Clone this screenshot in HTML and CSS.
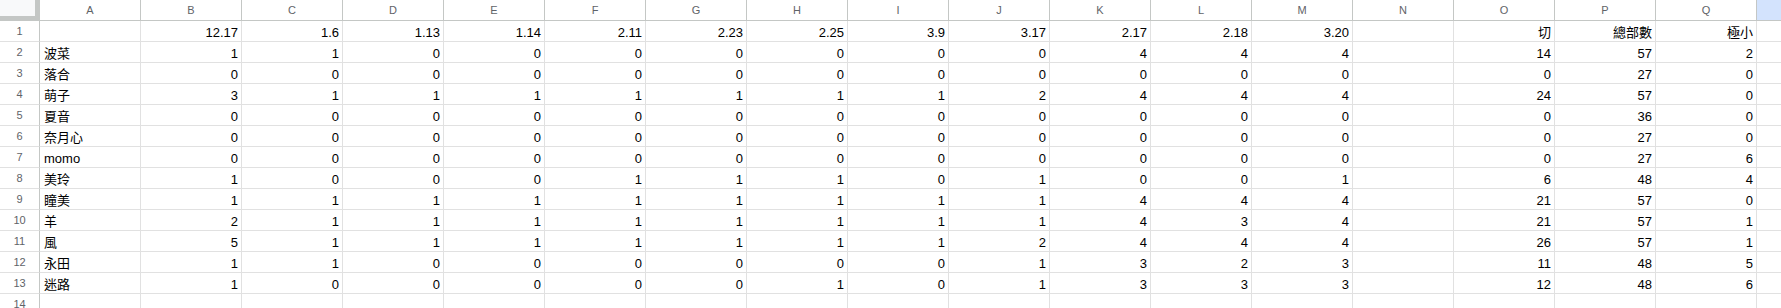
FILE: index.html
```html
<!DOCTYPE html>
<html lang="zh-Hant">
<head>
<meta charset="utf-8">
<title>Sheet</title>
<link rel="stylesheet" href="styles.css">
</head>
<body>
<div class="sheet">
  <div class="row head">
    <div class="corner"></div>
    <div class="ch">A</div><div class="ch">B</div><div class="ch">C</div><div class="ch">D</div><div class="ch">E</div><div class="ch">F</div><div class="ch">G</div><div class="ch">H</div><div class="ch">I</div><div class="ch">J</div><div class="ch">K</div><div class="ch">L</div><div class="ch">M</div><div class="ch">N</div><div class="ch">O</div><div class="ch">P</div><div class="ch">Q</div><div class="ch sel"></div>
  </div>
  <div class="row">
    <div class="rh">1</div><div class="c t"></div>
    <div class="c">12.17</div><div class="c">1.6</div><div class="c">1.13</div><div class="c">1.14</div><div class="c">2.11</div><div class="c">2.23</div><div class="c">2.25</div><div class="c">3.9</div><div class="c">3.17</div><div class="c">2.17</div><div class="c">2.18</div><div class="c">3.20</div><div class="c"></div><div class="c">切</div><div class="c">總部數</div><div class="c">極小</div><div class="c x"></div>
  </div>
  <div class="row">
    <div class="rh">2</div><div class="c t">波菜</div>
    <div class="c">1</div><div class="c">1</div><div class="c">0</div><div class="c">0</div><div class="c">0</div><div class="c">0</div><div class="c">0</div><div class="c">0</div><div class="c">0</div><div class="c">4</div><div class="c">4</div><div class="c">4</div><div class="c"></div><div class="c">14</div><div class="c">57</div><div class="c">2</div><div class="c x"></div>
  </div>
  <div class="row">
    <div class="rh">3</div><div class="c t">落合</div>
    <div class="c">0</div><div class="c">0</div><div class="c">0</div><div class="c">0</div><div class="c">0</div><div class="c">0</div><div class="c">0</div><div class="c">0</div><div class="c">0</div><div class="c">0</div><div class="c">0</div><div class="c">0</div><div class="c"></div><div class="c">0</div><div class="c">27</div><div class="c">0</div><div class="c x"></div>
  </div>
  <div class="row">
    <div class="rh">4</div><div class="c t">萌子</div>
    <div class="c">3</div><div class="c">1</div><div class="c">1</div><div class="c">1</div><div class="c">1</div><div class="c">1</div><div class="c">1</div><div class="c">1</div><div class="c">2</div><div class="c">4</div><div class="c">4</div><div class="c">4</div><div class="c"></div><div class="c">24</div><div class="c">57</div><div class="c">0</div><div class="c x"></div>
  </div>
  <div class="row">
    <div class="rh">5</div><div class="c t">夏音</div>
    <div class="c">0</div><div class="c">0</div><div class="c">0</div><div class="c">0</div><div class="c">0</div><div class="c">0</div><div class="c">0</div><div class="c">0</div><div class="c">0</div><div class="c">0</div><div class="c">0</div><div class="c">0</div><div class="c"></div><div class="c">0</div><div class="c">36</div><div class="c">0</div><div class="c x"></div>
  </div>
  <div class="row">
    <div class="rh">6</div><div class="c t">奈月心</div>
    <div class="c">0</div><div class="c">0</div><div class="c">0</div><div class="c">0</div><div class="c">0</div><div class="c">0</div><div class="c">0</div><div class="c">0</div><div class="c">0</div><div class="c">0</div><div class="c">0</div><div class="c">0</div><div class="c"></div><div class="c">0</div><div class="c">27</div><div class="c">0</div><div class="c x"></div>
  </div>
  <div class="row">
    <div class="rh">7</div><div class="c t">momo</div>
    <div class="c">0</div><div class="c">0</div><div class="c">0</div><div class="c">0</div><div class="c">0</div><div class="c">0</div><div class="c">0</div><div class="c">0</div><div class="c">0</div><div class="c">0</div><div class="c">0</div><div class="c">0</div><div class="c"></div><div class="c">0</div><div class="c">27</div><div class="c">6</div><div class="c x"></div>
  </div>
  <div class="row">
    <div class="rh">8</div><div class="c t">美玲</div>
    <div class="c">1</div><div class="c">0</div><div class="c">0</div><div class="c">0</div><div class="c">1</div><div class="c">1</div><div class="c">1</div><div class="c">0</div><div class="c">1</div><div class="c">0</div><div class="c">0</div><div class="c">1</div><div class="c"></div><div class="c">6</div><div class="c">48</div><div class="c">4</div><div class="c x"></div>
  </div>
  <div class="row">
    <div class="rh">9</div><div class="c t">瞳美</div>
    <div class="c">1</div><div class="c">1</div><div class="c">1</div><div class="c">1</div><div class="c">1</div><div class="c">1</div><div class="c">1</div><div class="c">1</div><div class="c">1</div><div class="c">4</div><div class="c">4</div><div class="c">4</div><div class="c"></div><div class="c">21</div><div class="c">57</div><div class="c">0</div><div class="c x"></div>
  </div>
  <div class="row">
    <div class="rh">10</div><div class="c t">羊</div>
    <div class="c">2</div><div class="c">1</div><div class="c">1</div><div class="c">1</div><div class="c">1</div><div class="c">1</div><div class="c">1</div><div class="c">1</div><div class="c">1</div><div class="c">4</div><div class="c">3</div><div class="c">4</div><div class="c"></div><div class="c">21</div><div class="c">57</div><div class="c">1</div><div class="c x"></div>
  </div>
  <div class="row">
    <div class="rh">11</div><div class="c t">風</div>
    <div class="c">5</div><div class="c">1</div><div class="c">1</div><div class="c">1</div><div class="c">1</div><div class="c">1</div><div class="c">1</div><div class="c">1</div><div class="c">2</div><div class="c">4</div><div class="c">4</div><div class="c">4</div><div class="c"></div><div class="c">26</div><div class="c">57</div><div class="c">1</div><div class="c x"></div>
  </div>
  <div class="row">
    <div class="rh">12</div><div class="c t">永田</div>
    <div class="c">1</div><div class="c">1</div><div class="c">0</div><div class="c">0</div><div class="c">0</div><div class="c">0</div><div class="c">0</div><div class="c">0</div><div class="c">1</div><div class="c">3</div><div class="c">2</div><div class="c">3</div><div class="c"></div><div class="c">11</div><div class="c">48</div><div class="c">5</div><div class="c x"></div>
  </div>
  <div class="row">
    <div class="rh">13</div><div class="c t">迷路</div>
    <div class="c">1</div><div class="c">0</div><div class="c">0</div><div class="c">0</div><div class="c">0</div><div class="c">0</div><div class="c">1</div><div class="c">0</div><div class="c">1</div><div class="c">3</div><div class="c">3</div><div class="c">3</div><div class="c"></div><div class="c">12</div><div class="c">48</div><div class="c">6</div><div class="c x"></div>
  </div>
  <div class="row">
    <div class="rh">14</div><div class="c t"></div>
    <div class="c"></div><div class="c"></div><div class="c"></div><div class="c"></div><div class="c"></div><div class="c"></div><div class="c"></div><div class="c"></div><div class="c"></div><div class="c"></div><div class="c"></div><div class="c"></div><div class="c"></div><div class="c"></div><div class="c"></div><div class="c"></div><div class="c x"></div>
  </div>
</div>
</body>
</html>
```

FILE: styles.css
```css
* { box-sizing: border-box; }
html, body {
  margin: 0;
  padding: 0;
  background: #ffffff;
  overflow: hidden;
}
.sheet {
  width: 1781px;
  font-family: "Liberation Sans", Arial, "Noto Sans CJK TC", sans-serif;
  font-size: 13px;
  color: #000000;
}
.row {
  display: grid;
  grid-template-columns: 40px repeat(17, 101px) 1fr;
  height: 21px;
}
.head {
  height: 21px;
}
.corner {
  background: #f8f9fa;
  border-right: 5px solid #c4c7c5;
  border-bottom: 5px solid #c4c7c5;
}
.ch {
  border-right: 1px solid #c4c7c5;
  border-bottom: 1px solid #c4c7c5;
  text-align: center;
  font-size: 11px;
  line-height: 20px;
  color: #5f6368;
}
.ch.sel {
  background: #d3e3fd;
  border-right: none;
}
.rh {
  border-right: 1px solid #c4c7c5;
  border-bottom: 1px solid #e1e1e1;
  text-align: center;
  font-size: 11px;
  line-height: 20px;
  color: #5f6368;
}
.c {
  border-right: 1px solid #e1e1e1;
  border-bottom: 1px solid #e1e1e1;
  text-align: right;
  padding: 3px 3px 0 3px;
  line-height: 17px;
  white-space: nowrap;
  overflow: hidden;
}
.c.t {
  text-align: left;
  padding-left: 4px;
}
.c.x {
  border-right: none;
}
```
